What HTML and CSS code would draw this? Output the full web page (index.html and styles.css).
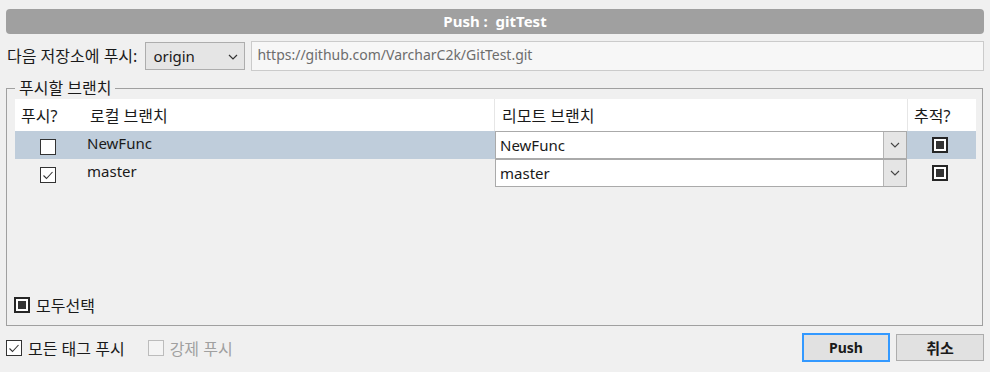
FILE: index.html
```html
<!DOCTYPE html>
<html lang="ko">
<head>
<meta charset="utf-8">
<title>Push</title>
<link rel="stylesheet" href="styles.css">
</head>
<body>
<div class="titlebar">Push :&nbsp; gitTest</div>

<div class="repo-row">
  <span class="repo-label ko">다음 저장소에 푸시:</span>
  <div class="select origin">
    <span>origin</span>
    <svg class="chev" width="10" height="6" viewBox="0 0 10 6"><path d="M1 1 L5 5 L9 1" fill="none" stroke="#333" stroke-width="1.2"/></svg>
  </div>
  <div class="url">https://github.com/VarcharC2k/GitTest.git</div>
</div>

<fieldset class="group">
  <legend class="ko">푸시할 브랜치</legend>
  <div class="group-body">
    <div class="trow thead">
      <div class="hcell h-push ko">푸시?</div>
      <div class="hcell h-local ko">로컬 브랜치</div>
      <div class="hcell h-remote ko">리모트 브랜치</div>
      <div class="hcell h-track ko">추적?</div>
    </div>
    <div class="trow selected">
      <div class="cell c-push"><span class="cb"></span></div>
      <div class="cell c-local">NewFunc</div>
      <div class="cell c-remote">
        <div class="combo"><span class="combo-text">NewFunc</span><span class="combo-btn"><svg width="10" height="6" viewBox="0 0 10 6"><path d="M1 1 L5 5 L9 1" fill="none" stroke="#444" stroke-width="1.1"/></svg></span></div>
      </div>
      <div class="cell c-track"><span class="cb mixed"><i></i></span></div>
    </div>
    <div class="trow">
      <div class="cell c-push"><span class="cb"><svg width="14" height="14" viewBox="0 0 14 14"><path d="M2.5 7.5 L5.5 10.5 L11.5 4" fill="none" stroke="#333" stroke-width="1.1"/></svg></span></div>
      <div class="cell c-local">master</div>
      <div class="cell c-remote">
        <div class="combo"><span class="combo-text">master</span><span class="combo-btn"><svg width="10" height="6" viewBox="0 0 10 6"><path d="M1 1 L5 5 L9 1" fill="none" stroke="#444" stroke-width="1.1"/></svg></span></div>
      </div>
      <div class="cell c-track"><span class="cb mixed"><i></i></span></div>
    </div>
    <label class="select-all"><span class="cb mixed"><i></i></span><span class="ko">모두선택</span></label>
  </div>
</fieldset>

<div class="footer">
  <label class="opt"><span class="cb"><svg width="14" height="14" viewBox="0 0 14 14"><path d="M2.5 7.5 L5.5 10.5 L11.5 4" fill="none" stroke="#333" stroke-width="1.1"/></svg></span><span class="ko">모든 태그 푸시</span></label>
  <label class="opt disabled"><span class="cb"></span><span class="ko">강제 푸시</span></label>
  <div class="spacer"></div>
  <button class="btn primary">Push</button>
  <button class="btn cancel">취소</button>
</div>
</body>
</html>
```

FILE: styles.css
```css
* { box-sizing: border-box; }

html, body {
  margin: 0;
  background: #f0f0f0;
}

body {
  padding: 9px 6px 0 6px;
  font-family: "Noto Sans", "Noto Sans CJK KR", sans-serif;
  font-size: 14px;
  color: #1a1a1a;
  width: 990px;
  height: 372px;
  overflow: hidden;
}

.ko {
  font-size: 16px;
}

.titlebar {
  height: 25px;
  line-height: 25px;
  background: #a0a0a0;
  border-radius: 4px;
  color: #fff;
  font-weight: bold;
  font-size: 15px;
  text-align: center;
}

.repo-row {
  display: flex;
  align-items: center;
  height: 30px;
  margin-top: 7px;
}

.repo-label {
  margin-left: 1px;
  line-height: 20px;
}

.select {
  display: flex;
  align-items: center;
  justify-content: space-between;
  height: 28px;
  background: #e5e5e5;
  border: 1px solid #adadad;
}

.origin {
  width: 100px;
  margin-left: 8px;
  padding: 0 6px 0 7px;
  font-size: 15px;
}

.chev { margin-top: 1px; }

.url {
  flex: 1;
  margin-left: 6px;
  height: 30px;
  line-height: 26px;
  padding-left: 5px;
  background: #f7f7f7;
  border: 1px solid #cbcbcb;
  color: #6d6d6d;
}

.group {
  margin: 7px 1px 0 0;
  padding: 1px 6px 0 8px;
  border: 1px solid #a0a0a0;
  min-width: 0;
}

.group legend {
  padding: 0 4px;
  margin-left: 0;
  line-height: 20px;
  height: 20px;
}

.group-body {
  display: flex;
  flex-direction: column;
  height: 226px;
}

.trow {
  display: grid;
  grid-template-columns: 65px 414px 413px 69px;
  height: 28px;
}

.trow.thead {
  height: 32px;
  background: #fff;
}

.hcell {
  display: flex;
  align-items: center;
  padding-bottom: 1px;
}

.h-push { padding-left: 6px; }
.h-local { padding-left: 10px; }
.h-remote { padding-left: 7px; border-left: 1px solid #e6e6e6; }
.h-track { padding-left: 6px; border-left: 1px solid #e6e6e6; }

.trow.selected { background: #bfcddb; }

.cell {
  display: flex;
  align-items: flex-start;
}

.c-push {
  justify-content: center;
  padding: 8px 0 0 0;
}

.c-local {
  padding: 2px 0 0 7px;
  line-height: 20px;
  font-size: 15px;
}

.c-remote { padding-left: 1px; font-size: 15px; }

.c-track {
  justify-content: center;
  padding: 6px 3px 0 0;
}

.combo {
  display: flex;
  width: 100%;
  height: 28px;
  background: #fff;
  border: 1px solid #aaaaaa;
}

.combo-text {
  flex: 1;
  padding-left: 4px;
  line-height: 26px;
}

.combo-btn {
  width: 23px;
  display: flex;
  align-items: center;
  justify-content: center;
  background: #e5e5e5;
  border-left: 1px solid #b5b5b5;
}

.cb {
  display: inline-flex;
  align-items: center;
  justify-content: center;
  width: 16px;
  height: 16px;
  flex: none;
  background: #fff;
  border: 1px solid #333;
}

.cb.mixed {
  border: 2px solid #262626;
  padding: 2px;
}

.cb.mixed i {
  display: block;
  width: 100%;
  height: 100%;
  background: #333;
}

.select-all {
  display: flex;
  align-items: center;
  gap: 6px;
  height: 24px;
  margin-top: auto;
  margin-bottom: 8px;
  margin-left: -1px;
}

.footer {
  display: flex;
  align-items: center;
  height: 29px;
  margin-top: 7px;
}

.opt {
  display: flex;
  align-items: center;
  gap: 6px;
}

.opt + .opt { margin-left: 23px; }

.opt.disabled { color: #a0a0a0; }
.opt.disabled .cb {
  border-color: #bcbcbc;
  background: #f4f4f4;
}

.spacer { flex: 1; }

.btn {
  width: 88px;
  height: 27px;
  font: inherit;
  font-weight: bold;
  font-size: 14px;
  color: #1a1a1a;
  background: #e1e1e1;
  border: 1px solid #adadad;
  padding: 0;
  margin-left: 6px;
}

.btn.cancel { font-size: 15px; }

.btn.primary {
  height: 29px;
  border: 2px solid #3399ff;
  margin-left: 0;
}
```
